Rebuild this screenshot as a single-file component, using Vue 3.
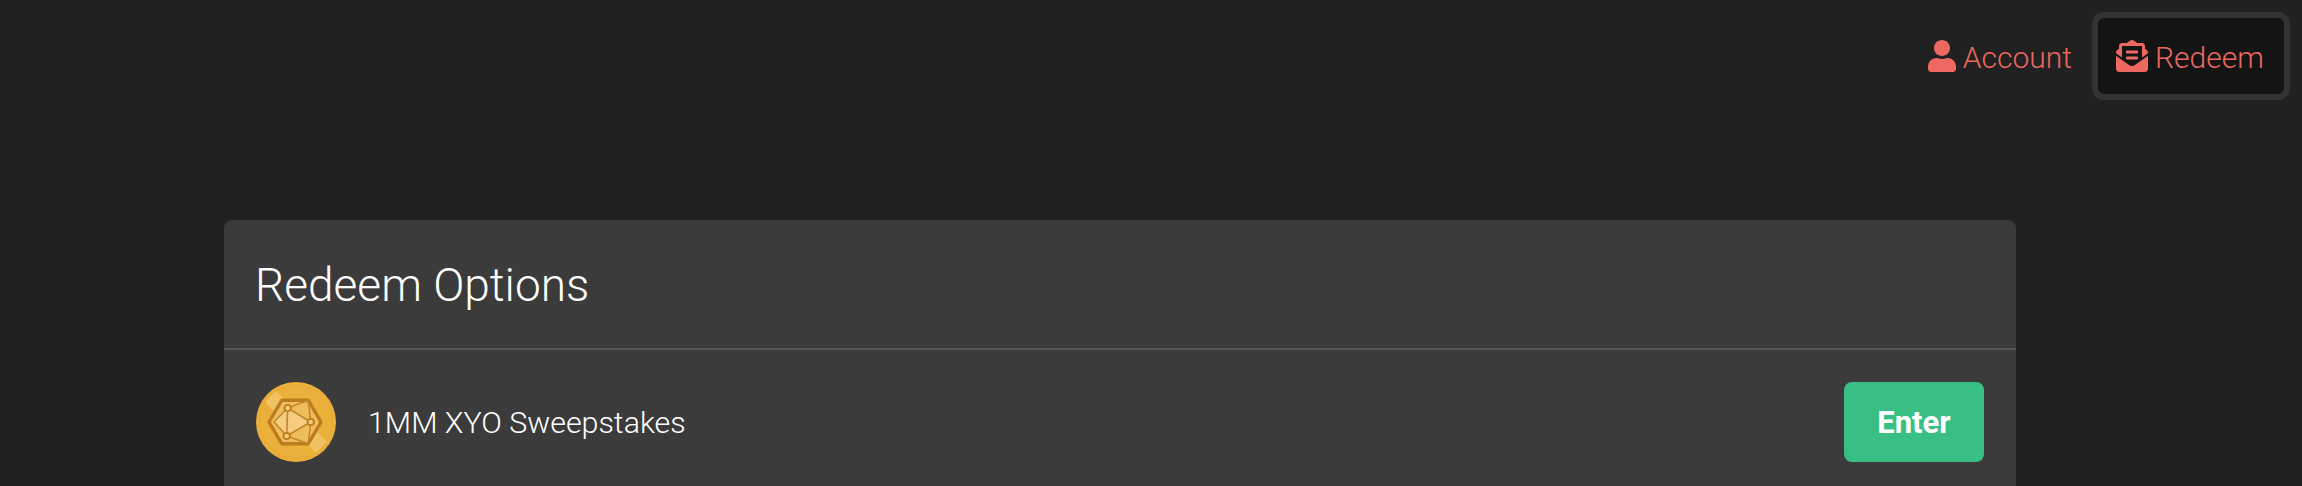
<template>
  <div class="page">
    <!-- Top nav -->
    <nav class="nav">
      <a class="nav-link">
        <svg class="icon-user" viewBox="0 0 448 512"><path fill="currentColor" d="M224 256c70.7 0 128-57.3 128-128S294.7 0 224 0 96 57.3 96 128s57.3 128 128 128zm89.6 32h-16.7c-22.2 10.2-46.9 16-72.9 16s-50.6-5.8-72.9-16h-16.7C60.2 288 0 348.2 0 422.4V464c0 26.5 21.5 48 48 48h352c26.5 0 48-21.5 48-48v-41.6c0-74.2-60.2-134.4-134.4-134.4z"/></svg>
        <span class="nav-text">Account</span>
      </a>
      <a class="nav-link active">
        <svg class="icon-mail" viewBox="0 0 512 512"><path fill="currentColor" d="M176 216h160c8.84 0 16-7.16 16-16v-16c0-8.84-7.16-16-16-16H176c-8.84 0-16 7.16-16 16v16c0 8.84 7.16 16 16 16zm-16 80c0 8.84 7.16 16 16 16h160c8.84 0 16-7.16 16-16v-16c0-8.84-7.16-16-16-16H176c-8.84 0-16 7.16-16 16v16zm96 121.13c-16.42 0-32.84-5.06-46.86-15.19L0 250.86V464c0 26.51 21.49 48 48 48h416c26.51 0 48-21.49 48-48V250.86L302.86 401.94c-14.02 10.12-30.44 15.19-46.86 15.19zm237.61-254.18c-8.85-6.94-17.24-13.47-29.61-22.81V96c0-26.51-21.49-48-48-48h-77.55c-3.04-2.2-5.87-4.26-9.04-6.56C312.6 29.17 279.2-.35 256 0c-23.2-.35-56.59 29.17-73.41 41.44-3.17 2.3-6 4.36-9.04 6.56H96c-26.51 0-48 21.49-48 48v44.14c-12.37 9.33-20.76 15.87-29.61 22.81A47.995 47.995 0 0 0 0 200.72v10.65l96 69.35V96h320v184.72l96-69.35v-10.65c0-14.74-6.78-28.67-18.39-37.77z"/></svg>
        <span class="nav-text">Redeem</span>
      </a>
    </nav>

    <!-- Card -->
    <section class="card">
      <h1 class="card-title">Redeem Options</h1>
      <div class="option" v-for="opt in options" :key="opt.name">
        <svg class="coin" viewBox="0 0 80 80">
          <circle cx="40" cy="40" r="40" fill="#ebb03a"/>
          <circle cx="40" cy="40" r="36.5" fill="none" stroke="#e6aa36" stroke-width="1"/>
          <path d="M20 9 L9 20 L60 71 L71 60 Z" fill="#f3c873" opacity="0.75"/>
          <path d="M25.7 18.3H52.3L65 40L52.3 61.7H25.7L13 40Z" fill="#efbd5c" stroke="#bd7b20" stroke-width="3.4" stroke-linejoin="round"/>
          <path d="M31.7 26L18 40L30.7 54L54.7 40ZM31.7 26L30.7 54M31.7 26L52.3 18.3M54.7 40L52.3 18.3M54.7 40L52.3 61.7M30.7 54L52.3 61.7" fill="#f4cd80" stroke="#c4842a" stroke-width="1.6" stroke-linejoin="round"/>
          <circle cx="31.7" cy="26" r="3.2" fill="#f3cb79" stroke="#bd7b20" stroke-width="1.8"/>
          <circle cx="54.7" cy="40" r="3.2" fill="#f3cb79" stroke="#bd7b20" stroke-width="1.8"/>
          <circle cx="30.7" cy="54" r="3.2" fill="#f3cb79" stroke="#bd7b20" stroke-width="1.8"/>
        </svg>
        <span class="option-name">{{ opt.name }}</span>
        <button class="btn-enter">Enter</button>
      </div>
    </section>
  </div>
</template>

<script setup>
const options = [{ name: '1MM XYO Sweepstakes' }];
</script>

<style>
html, body {
  margin: 0;
  height: 100%;
  overflow: hidden;
  background: #212121;
}
</style>

<style scoped>
.page {
  min-height: 486px;
  background: #212121;
  font-family: Roboto, sans-serif;
  color: #fff;
}

.nav {
  display: flex;
  justify-content: flex-end;
  align-items: flex-start;
  gap: 20px;
  padding: 12px 12px 0;
  height: 100px;
}

.nav-link {
  display: flex;
  align-items: center;
  gap: 7px;
  height: 88px;
  color: #ec6860;
  font-size: 30px;
  font-weight: 300;
  box-sizing: border-box;
}
.nav-text { padding-top: 2px; }
.nav-link.active {
  width: 198px;
  padding: 0 18px;
  background: #141414;
  border: 6px solid #333;
  border-radius: 12px;
}
.icon-user { width: 28px; height: 32px; }
.icon-mail { width: 32px; height: 32px; flex: none; }

.card {
  margin: 108px 0 0 224px;
  width: 1792px;
  background: #3b3b3b;
  border-radius: 8px;
}

.card-title {
  margin: 0;
  padding: 0 31px;
  height: 128px;
  line-height: 130px;
  font-size: 46px;
  font-weight: 300;
  border-bottom: 2px solid #555;
}

.option {
  display: flex;
  align-items: center;
  padding: 32px;
}
.coin { width: 80px; height: 80px; flex: none; }
.option-name {
  margin-left: 32px;
  font-size: 30.4px;
  font-weight: 300;
}
.btn-enter {
  margin-left: auto;
  width: 140px;
  height: 80px;
  border: none;
  border-radius: 8px;
  background: #39bf83;
  color: #fff;
  font-family: inherit;
  font-size: 31px;
  font-weight: 700;
}
</style>
